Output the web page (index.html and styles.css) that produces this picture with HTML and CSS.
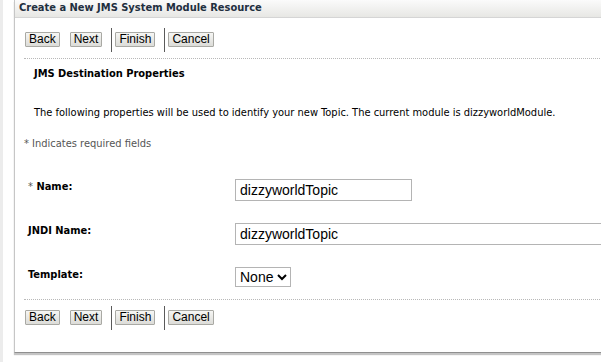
FILE: index.html
```html
<!DOCTYPE html>
<html lang="en">
<head>
    <meta charset="UTF-8">
    <title>Create a New JMS System Module Resource</title>
    <link rel="stylesheet" href="styles.css">
</head>
<body>
    <div class="page">
        <div class="side-strip"></div>
        <div class="panel">
            <div class="panel-title">Create a New JMS System Module Resource</div>

            <div class="toolbar">
                <button class="btn">Back</button>
                <button class="btn">Next</button>
                <span class="sep"></span>
                <button class="btn">Finish</button>
                <span class="sep"></span>
                <button class="btn">Cancel</button>
            </div>

            <div class="section">
                <h2>JMS Destination Properties</h2>
                <p class="intro">The following properties will be used to identify your new Topic. The current module is dizzyworldModule.</p>
            </div>

            <p class="required-note">* Indicates required fields</p>

            <div class="form">
                <div class="row">
                    <label><span class="star">*</span> Name:</label>
                    <input type="text" class="field field-short" value="dizzyworldTopic">
                </div>
                <div class="row">
                    <label>JNDI Name:</label>
                    <input type="text" class="field field-long" value="dizzyworldTopic">
                </div>
                <div class="row">
                    <label>Template:</label>
                    <select class="field-select">
                        <option>None</option>
                    </select>
                </div>
            </div>

            <div class="bottom-bar">
                <div class="toolbar">
                    <button class="btn">Back</button>
                    <button class="btn">Next</button>
                    <span class="sep"></span>
                    <button class="btn">Finish</button>
                    <span class="sep"></span>
                    <button class="btn">Cancel</button>
                </div>
            </div>
        </div>
    </div>
</body>
</html>
```

FILE: styles.css
```css
* {
    margin: 0;
    padding: 0;
    box-sizing: border-box;
}

body {
    font-family: "DejaVu Sans Condensed", "DejaVu Sans", sans-serif;
    font-size: 11px;
    color: #000;
    background: #fff;
    overflow: hidden;
}

.page {
    display: flex;
    width: 760px;
}

.side-strip {
    flex: none;
    width: 3px;
    height: 362px;
    background: #ececec;
}

.panel {
    margin-left: 11px;
    flex: 1;
    height: 353px;
    border-left: 1px solid #c6c6c6;
    border-bottom: 1px solid #8f8f8f;
    box-shadow: 0 2px 1px #c4c4c4;
}

.panel-title {
    height: 18px;
    padding: 0 4px;
    font-weight: bold;
    font-size: 11px;
    line-height: 16px;
    color: #1f2f3f;
    background: linear-gradient(#fbfbfb, #e7e7e4);
    border-bottom: 1px solid #d5d5d5;
}

.toolbar {
    display: flex;
    align-items: center;
    height: 23px;
    margin: 10px 0 0 10px;
}

.btn {
    height: 15px;
    padding: 0 3px;
    font-family: "Liberation Sans", Arial, sans-serif;
    font-size: 12px;
    line-height: 13px;
    color: #000;
    background: linear-gradient(#f6f6f4, #dcdcd8);
    border: 1px solid #a9a9a4;
    border-radius: 1px;
    margin-right: 10px;
}

.sep {
    width: 1px;
    height: 24px;
    background: #5a5a5a;
    margin: 0 3px 0 -1px;
}

.section {
    margin: 7px 0 0 9px;
    border-top: 1px dotted #b8b8b8;
    padding: 8px 0 0 10px;
}

h2 {
    font-size: 11px;
    font-weight: bold;
    line-height: 13px;
}

.intro {
    margin-top: 26px;
    line-height: 13px;
}

.required-note {
    margin: 18px 0 0 9px;
    color: #555;
    line-height: 13px;
}

.star {
    color: #555;
    font-weight: normal;
}

.form {
    margin: 30px 0 0 13px;
}

.row {
    display: flex;
    align-items: flex-start;
    height: 31px;
}

.row + .row {
    margin-top: 13px;
}

.row label {
    width: 207px;
    font-weight: bold;
    line-height: 13px;
}

.field {
    height: 22px;
    padding: 0 4px;
    font-family: "Liberation Sans", Arial, sans-serif;
    font-size: 14px;
    color: #000;
    border: 1px solid #b4b4b4;
    margin-top: -1px;
}

.field-short {
    width: 177px;
}

.field-long {
    width: 400px;
}

.field-select {
    height: 20px;
    width: 56px;
    font-family: "Liberation Sans", Arial, sans-serif;
    font-size: 14px;
    border: 1px solid #b4b4b4;
    margin-top: -1px;
    background: #fff;
}

.bottom-bar {
    margin-left: 9px;
    border-top: 1px dotted #b8b8b8;
    padding-top: 1px;
}

.bottom-bar .toolbar {
    margin: 5px 0 0 1px;
}
```
